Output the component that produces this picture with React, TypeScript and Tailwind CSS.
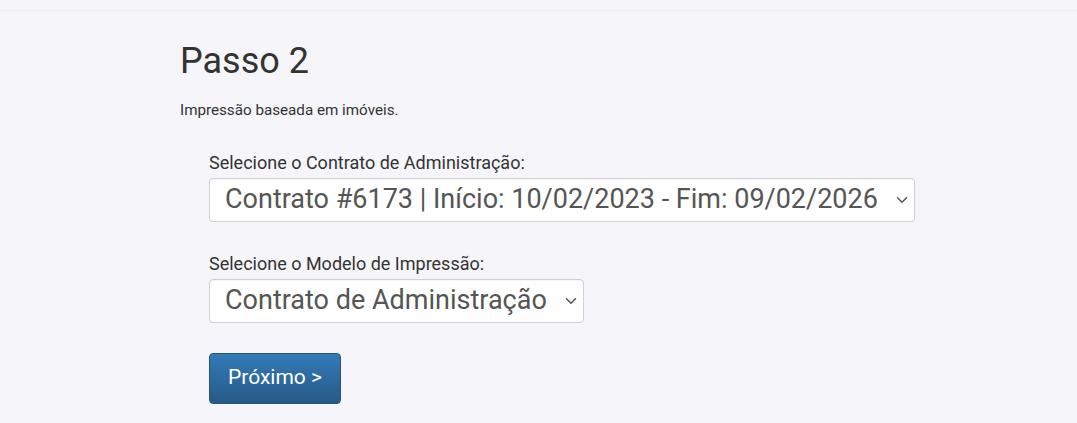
import { ChevronDown } from "lucide-react";

const font = { fontFamily: "Roboto, 'Liberation Sans', sans-serif" };

function FakeSelect({ value }: { value: string }) {
  return (
    <div className="inline-flex h-[44px] items-center rounded-[4px] border border-[#cfcfd4] bg-white pl-[15px] pr-[3px] shadow-[inset_0_1px_1px_rgba(0,0,0,0.04)]">
      <span className="text-[27px] leading-none text-[#555] whitespace-nowrap">{value}</span>
      <ChevronDown className="ml-[15px] h-[18px] w-[18px] text-[#555]" strokeWidth={2} />
    </div>
  );
}

export default function App() {
  return (
    <div className="min-h-[423px] bg-[#f6f6fa] text-[#333]" style={font}>
      <div className="h-[11px] border-b border-[#ededf2]" />
      <div className="pl-[180px] pt-[31px]">
        <h1 className="text-[36px] leading-[1.1] font-normal">Passo 2</h1>
        <p className="mt-[18px] text-[15.2px] leading-[20px]">Impressão baseada em imóveis.</p>

        <div className="pl-[29px] pt-[32px]">
          <label className="block text-[18px] leading-[22px]">Selecione o Contrato de Administração:</label>
          <div className="mt-[4px]">
            <FakeSelect value="Contrato #6173 | Início: 10/02/2023 - Fim: 09/02/2026" />
          </div>

          <label className="mt-[31px] block text-[18px] leading-[22px]">Selecione o Modelo de Impressão:</label>
          <div className="mt-[4px]">
            <FakeSelect value="Contrato de Administração" />
          </div>

          <button className="mt-[30px] h-[51px] rounded-[4px] border border-[#245580] bg-gradient-to-b from-[#337ab7] to-[#265a88] px-[18px] text-[21px] text-white">
            Próximo &gt;
          </button>
        </div>
      </div>
    </div>
  );
}
